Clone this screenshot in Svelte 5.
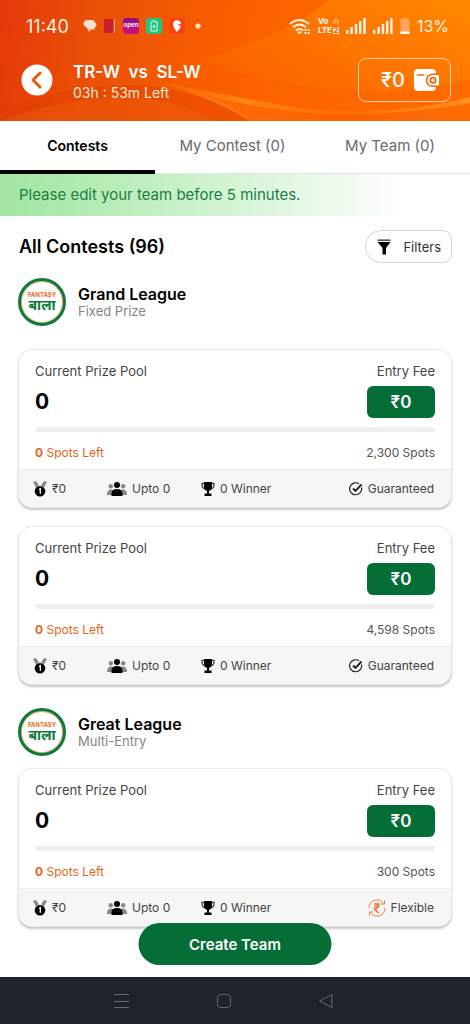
<script>
  let activeTab = $state('Contests');

  const tabs = ['Contests', 'My Contest (0)', 'My Team (0)'];

  const leagues = [
    {
      name: 'Grand League',
      type: 'Fixed Prize',
      contests: [
        { id: 1, pool: '0', fee: '₹0', left: 0, filled: 0, spots: '2,300', first: '₹0', upto: 0, winners: 0, tag: 'Guaranteed' },
        { id: 2, pool: '0', fee: '₹0', left: 0, filled: 0, spots: '4,598', first: '₹0', upto: 0, winners: 0, tag: 'Guaranteed' }
      ]
    },
    {
      name: 'Great League',
      type: 'Multi-Entry',
      contests: [
        { id: 3, pool: '0', fee: '₹0', left: 0, filled: 0, spots: '300', first: '₹0', upto: 0, winners: 0, tag: 'Flexible' }
      ]
    }
  ];
</script>

{#snippet signal()}
  <svg class="signal" viewBox="0 0 20 16" width="20" height="16" fill="#fff3e6">
    <rect x="0" y="12" width="2.4" height="4" />
    <rect x="4.4" y="9" width="2.4" height="7" />
    <rect x="8.8" y="6" width="2.4" height="10" />
    <rect x="13" y="3" width="2.4" height="13" />
    <rect x="17.2" y="0" width="2.4" height="16" />
  </svg>
{/snippet}

<div class="app">
  <header class="header">
    <svg class="waves" viewBox="0 0 470 121" preserveAspectRatio="none" aria-hidden="true">
      <defs>
        <linearGradient id="glow" x1="0" y1="1" x2="1" y2="0">
          <stop offset="0" stop-color="#ff8a00" stop-opacity="0" />
          <stop offset="1" stop-color="#ff9c00" stop-opacity="0.6" />
        </linearGradient>
        <linearGradient id="streak" x1="0" x2="1">
          <stop offset="0" stop-color="#ff8c1a" stop-opacity="0.1" />
          <stop offset="0.3" stop-color="#ff8c1a" stop-opacity="0.8" />
          <stop offset="0.6" stop-color="#ff7a00" stop-opacity="0.5" />
          <stop offset="1" stop-color="#ff9a2a" stop-opacity="0.8" />
        </linearGradient>
      </defs>
      <path d="M200 60Q290 35 328 0H470V80Q340 110 200 60Z" fill="url(#glow)" />
      <path d="M0 108Q90 80 150 86Q215 96 250 121H0Z" fill="#dc3a00" opacity="0.35" />
      <path d="M0 121Q60 98 130 97Q180 100 215 121Z" fill="#f26a10" opacity="0.3" />
      <path d="M150 80Q240 98 300 108Q390 118 470 97V103Q440 112 425 121H250Q215 98 150 80Z" fill="url(#streak)" />
      <path d="M250 121Q230 104 205 95Q270 112 330 114Q400 116 470 103Q440 112 425 121Z" fill="#fb5800" opacity="0.6" />
    </svg>

    <div class="status">
      <span class="clock">11:40</span>
      <div class="notifs">
        <svg viewBox="0 0 14 14" width="14" height="14" fill="#ffe0cf">
          <path d="M3.500 1h5q3 0 3.300 2.300Q13.500 4 13.500 6q0 2.300-2 2.800V10.500H8L5.500 13V10.500Q3.500 10 3.500 8 .5 7.500.5 4.500T3.500 1z" />
        </svg>
        <svg viewBox="0 0 12 16" width="12" height="16">
          <rect y="1" width="9" height="14" rx="1" fill="#c8202f" />
          <rect x="10" y="1" width="1" height="14" fill="#f2a58c" />
        </svg>
        <span class="open">open</span>
        <svg viewBox="0 0 16 16" width="16" height="16">
          <rect width="16" height="16" rx="3" fill="#26c281" />
          <path d="M5 4h1.500V3h3v1H11v9H5z" fill="none" stroke="#d9ffe9" />
          <path d="M8 6.500v4M6.500 8.500h3" stroke="#d9ffe9" />
        </svg>
        <svg viewBox="0 0 16 16" width="16" height="16">
          <rect width="16" height="16" rx="4" fill="#f94212" />
          <path d="M8 2.200a4 4 0 0 1 4 3.800l-2.500.3L9 7.500h3Q11 11 8 14 4 9.500 4 6a4 4 0 0 1 4-3.800z" fill="#fff" />
        </svg>
        <svg viewBox="0 0 6 6" width="6" height="6"><circle cx="3" cy="3" r="2.600" fill="#ffe3d2" /></svg>
      </div>
      <div class="system">
        <svg viewBox="0 0 22 17" width="22" height="17" fill="none" stroke="#fff3e6" stroke-width="2">
          <path d="M1 6Q10 -2 20 6M4 9.300Q10.500 3.700 17 9.300M7 12.400Q10.500 9.500 14 12.400" />
          <path d="M8.500 14L10.500 16 12.500 14z" fill="#fff3e6" stroke-width="1" />
          <path d="M16.500 11v5M19.700 11v5" stroke-dasharray="2 1" />
        </svg>
        <div class="volte">
          <span>Vo<svg viewBox="0 0 6 7" width="6" height="7"><path d="M1 6V2.500Q1 1 3 1t2 1.500V6M1 4h4" /></svg></span>
          <span>LTE<b>2</b></span>
        </div>
        {@render signal()}
        {@render signal()}
        <svg viewBox="0 0 10 16" width="10" height="16">
          <path d="M2.500 0h5v1h2v15h-9V1h2z" fill="#ffa45a" />
          <rect x="0.500" y="13.500" width="9" height="2.500" fill="#fff" />
        </svg>
        <span class="percent">13%</span>
      </div>
    </div>

    <div class="match">
      <button class="back" aria-label="Back">
        <svg viewBox="0 0 32 32" width="32" height="32">
          <circle cx="16" cy="16" r="15.500" fill="#fff" />
          <path d="M19 9L12 16l7 7" fill="none" stroke="#e45a0c" stroke-width="3" stroke-linecap="round" stroke-linejoin="round" />
        </svg>
      </button>
      <div class="match-info">
        <h1>TR-W&nbsp; vs &nbsp;SL-W</h1>
        <p>03h : 53m Left</p>
      </div>
      <button class="wallet">
        <span>₹0</span>
        <svg viewBox="0 0 26 24" width="26" height="24">
          <path d="M5 1h14q4 0 4 4v14q0 4-4 4H5q-4 0-4-4V5q0-4 4-4z" fill="#fff" />
          <path d="M4.500 7h6" stroke="#fb6500" stroke-width="1.600" stroke-linecap="round" />
          <path d="M27 6.200H19.500a6 6 0 0 0 0 12H27" fill="#fff" stroke="#fb6500" stroke-width="1.600" />
          <circle cx="20" cy="12.200" r="2.600" fill="none" stroke="#fb6500" stroke-width="1.800" />
        </svg>
      </button>
    </div>
  </header>

  <nav class="tabs">
    {#each tabs as tab}
      <button class:active={activeTab === tab} onclick={() => (activeTab = tab)}>{tab}</button>
    {/each}
  </nav>

  <p class="notice">Please edit your team before 5 minutes.</p>

  <main>
    <div class="heading">
      <h2>All Contests (96)</h2>
      <button class="filters">
        <svg viewBox="0 0 14 16" width="14" height="16">
          <path d="M0.500 3H13.500L9 9v6.500H5.500V9z" fill="#000" />
          <path d="M0.500 1.200h13" stroke="#555" stroke-width="1.600" />
        </svg>
        Filters
      </button>
    </div>

    {#each leagues as league}
      <section>
        <div class="league">
          <div class="logo"><small>FANTASY</small><span lang="hi">बाला</span></div>
          <div>
            <h3>{league.name}</h3>
            <p>{league.type}</p>
          </div>
        </div>

        {#each league.contests as contest (contest.id)}
          <article class="card">
            <div class="card-body">
              <div class="row labels">
                <span>Current Prize Pool</span>
                <span>Entry Fee</span>
              </div>
              <div class="row prize">
                <strong>{contest.pool}</strong>
                <button class="fee">{contest.fee}</button>
              </div>
              <div class="track"><div class="fill" style="width: {contest.filled}%"></div></div>
              <div class="row spots">
                <span class="left"><b>{contest.left}</b> Spots Left</span>
                <span>{contest.spots} Spots</span>
              </div>
            </div>
            <footer class="card-footer">
              <span class="stat">
                <svg viewBox="0 0 14 16" width="14" height="16">
                  <path d="M0 1l3-1 3 4.500-3 2zM14 1l-3-1-3 4.500 3 2z" fill="#888" />
                  <circle cx="7" cy="10.300" r="5.300" fill="#000" />
                  <path d="M6 8.500l1.300-.8v5" fill="none" stroke="#fff" stroke-width="1.300" />
                </svg>
                {contest.first}
              </span>
              <span class="stat">
                <svg viewBox="0 0 20 16" width="20" height="16">
                  <g fill="#888">
                    <circle cx="3.800" cy="5.200" r="2.200" />
                    <circle cx="16.200" cy="5.200" r="2.200" />
                    <path d="M0 14q0-5.500 4-5.500t4 5.500zM12 14q0-5.500 4-5.500t4 5.500z" />
                  </g>
                  <circle cx="10" cy="4" r="3" fill="#000" />
                  <path d="M4.500 15v-2.500q0-4.500 5.500-4.500t5.500 4.500V15z" fill="#000" />
                </svg>
                Upto {contest.upto}
              </span>
              <span class="stat">
                <svg viewBox="0 0 14 16" width="14" height="16">
                  <path d="M3.500 2.500H1V4q0 3.500 4 4M10.500 2.500H13V4q0 3.500-4 4" fill="none" stroke="#444" stroke-width="1.300" />
                  <path d="M3 1h8v4q0 4-3 5v2.500h2.500V15h-7v-2.500H6V10Q3 9 3 5z" fill="#000" />
                </svg>
                {contest.winners} Winner
              </span>
              <span class="stat tag">
                {#if contest.tag === 'Guaranteed'}
                  <svg viewBox="0 0 14 14" width="14" height="14" fill="none" stroke="#222">
                    <path d="M12.500 5.500A6 6 0 1 1 10 1.800" stroke-width="1.200" />
                    <path d="M4 6.500L6.500 9 12.500 2.500" stroke-width="1.900" />
                  </svg>
                {:else}
                  <svg viewBox="0 0 18 18" width="18" height="18" fill="none" stroke="#ee7b36">
                    <path d="M1 9A8 8 0 0 1 15.500 4.300M17 9A8 8 0 0 1 2.500 13.700M16.500 1.500v3.500H13M1.500 16.500V13H5" />
                    <path d="M6 5h6M6 7.500h6M7 5q3 0 3 2.200T6.500 10l4 4" stroke-width="1.700" />
                  </svg>
                {/if}
                {contest.tag}
              </span>
            </footer>
          </article>
        {/each}
      </section>
    {/each}
  </main>

  <button class="create">Create Team</button>

  <div class="navbar">
    <button aria-label="Recent apps">
      <svg viewBox="0 0 16 16" width="16" height="16"><path d="M0 1.500h15M0 8.500h15M0 14.500h15" /></svg>
    </button>
    <button aria-label="Home">
      <svg viewBox="0 0 16 16" width="16" height="16"><rect x="1.500" y="1.500" width="13" height="13" rx="3" /></svg>
    </button>
    <button aria-label="Go back">
      <svg viewBox="0 0 16 16" width="16" height="16"><path d="M14 1.500v13L1.500 8z" stroke-linejoin="round" /></svg>
    </button>
  </div>
</div>

<style>
  :global(body) {
    margin: 0;
    background: #fefefe;
  }

  .app {
    display: flex;
    flex-direction: column;
    min-height: 100vh;
    font-family: Inter, "Noto Sans", sans-serif;
    color: #000;
  }

  h1, h2, h3, p {
    margin: 0;
  }

  button {
    padding: 0;
    border: none;
    background: none;
    font: inherit;
    color: inherit;
    cursor: pointer;
  }

  svg {
    display: block;
    flex: none;
  }

  .header {
    position: relative;
    box-sizing: border-box;
    height: 121px;
    padding: 14px 19px 0 21px;
    background: linear-gradient(100deg, #e5380c 0%, #ea5006 20%, #fb6000 50%, #ff6c00 100%);
    color: #fff;
  }

  .waves {
    position: absolute;
    inset: 0;
    width: 100%;
    height: 100%;
  }

  .status {
    position: relative;
    display: flex;
    align-items: center;
    height: 24px;
    padding-left: 5px;
    color: #fff0e4;
  }

  .clock {
    width: 57px;
    font-size: 18px;
  }

  .notifs {
    display: flex;
    align-items: center;
    gap: 7px;
  }

  .notifs svg:last-child {
    margin-left: 3px;
  }

  .open {
    width: 16px;
    height: 16px;
    border-radius: 3px;
    background: linear-gradient(#8d1087, #d1107c);
    font-size: 6px;
    font-weight: 700;
    line-height: 14px;
    text-align: center;
  }

  .system {
    display: flex;
    align-items: center;
    gap: 7px;
    margin-left: auto;
  }

  .volte {
    width: 21px;
    font-size: 8px;
    font-weight: 800;
  }

  .volte span {
    display: flex;
    align-items: center;
    justify-content: space-between;
    height: 9px;
    line-height: 9px;
  }

  .volte svg {
    fill: none;
    stroke: #ffc797;
  }

  .volte b {
    width: 6px;
    border-radius: 1px;
    background: #fff0e4;
    color: #fb6200;
    font-size: 7px;
    line-height: 7px;
    text-align: center;
  }

  .percent {
    margin-right: 2px;
    font-size: 16px;
  }

  .match {
    position: relative;
    display: flex;
    align-items: center;
    height: 44px;
    margin-top: 20px;
  }

  .match-info {
    margin-left: 20px;
    padding-top: 4px;
  }

  h1 {
    font-size: 17px;
    font-weight: 600;
    line-height: 22px;
  }

  .match-info p {
    font-size: 14px;
    line-height: 20px;
    color: #ffe8d8;
  }

  .wallet {
    display: flex;
    align-items: center;
    justify-content: flex-end;
    gap: 8px;
    box-sizing: border-box;
    width: 93px;
    height: 44px;
    margin-left: auto;
    padding-right: 11px;
    border: 1px solid #ffd2ad;
    border-radius: 8px;
    font-size: 20px;
    font-weight: 500;
  }

  .tabs {
    display: grid;
    grid-template-columns: 155fr 155fr 160fr;
    box-sizing: border-box;
    height: 53px;
    border-bottom: 1px solid #e4e4e4;
  }

  .tabs button {
    height: 53px;
    border-bottom: 4px solid transparent;
    font-size: 15px;
    color: #6a6a6a;
  }

  .tabs .active {
    border-color: #000;
    color: #000;
    font-size: 14px;
    font-weight: 600;
  }

  .notice {
    padding: 0 19px;
    background: linear-gradient(90deg, #a0e5a0, #d5f4d5 50%, #fefefe 85%);
    color: #197f43;
    font-size: 15px;
    line-height: 42px;
  }

  main {
    padding: 14px 18px 96px;
  }

  .heading {
    display: flex;
    align-items: center;
    justify-content: space-between;
  }

  h2 {
    padding-left: 1px;
    font-size: 18px;
    font-weight: 600;
  }

  .filters {
    display: flex;
    align-items: center;
    gap: 12px;
    box-sizing: border-box;
    height: 33px;
    padding: 0 10px 0 11px;
    border: 1px solid #d6d6d6;
    border-radius: 16px 9px 9px 16px;
    font-size: 13px;
    color: #333;
  }

  .league {
    display: flex;
    align-items: center;
    gap: 12px;
    padding: 15px 0 23px;
  }

  section + section .league {
    padding: 5px 0 12px;
  }

  .logo {
    display: flex;
    flex-direction: column;
    align-items: center;
    justify-content: center;
    box-sizing: border-box;
    width: 48px;
    height: 48px;
    border: 3px solid #0d7a3c;
    border-radius: 50%;
    box-shadow: inset 0 0 0 1px #f0a465;
    color: #0d7a3c;
  }

  .logo small {
    color: #ee6a22;
    font-size: 6px;
    font-weight: 700;
    line-height: 6px;
  }

  .logo span {
    font-size: 14px;
    font-weight: 700;
    line-height: 14px;
  }

  h3 {
    font-size: 16px;
    font-weight: 600;
    line-height: 18px;
  }

  .league p {
    font-size: 13px;
    line-height: 16px;
    color: #858585;
  }

  .card {
    box-sizing: border-box;
    margin-bottom: 18px;
    border: 1px solid #e8e8e8;
    border-radius: 14px;
    background: #fff;
    box-shadow: 0 2px 2px #c9c9c9;
    overflow: hidden;
  }

  .card-body {
    padding: 12px 16px 7px;
  }

  .row {
    display: flex;
    align-items: center;
    justify-content: space-between;
  }

  .labels {
    height: 18px;
    font-size: 13px;
    color: #444;
  }

  .prize {
    height: 43px;
  }

  .prize strong {
    font-size: 21px;
    font-weight: 700;
  }

  .fee {
    width: 68px;
    height: 32px;
    border-radius: 6px;
    background: #056d36;
    color: #fff;
    font-size: 17px;
    font-weight: 600;
  }

  .track {
    height: 5px;
    margin: 4px 0 10px;
    border-radius: 3px;
    background: #efefef;
  }

  .fill {
    height: 100%;
    border-radius: 3px;
    background: #e8641b;
  }

  .spots {
    height: 20px;
    font-size: 12px;
    color: #555;
  }

  .left {
    color: #e8641b;
  }

  .card-footer {
    display: grid;
    grid-template-columns: 74px 94px 1fr auto;
    align-items: center;
    box-sizing: border-box;
    height: 38px;
    padding: 0 17px 0 14px;
    border-top: 1px solid #eee;
    background: #f6f6f6;
    font-size: 12px;
    color: #444;
  }

  .stat {
    display: flex;
    align-items: center;
    gap: 5px;
  }

  .create {
    position: fixed;
    bottom: 59px;
    left: 50%;
    width: 193px;
    height: 42px;
    border-radius: 21px;
    background: #056d36;
    color: #fff;
    font-size: 15px;
    font-weight: 600;
    transform: translateX(-50%);
  }

  .navbar {
    position: fixed;
    bottom: 0;
    left: 0;
    right: 0;
    display: flex;
    align-items: center;
    justify-content: center;
    gap: 86px;
    height: 47px;
    padding-right: 23px;
    background: #1e2229;
  }

  .navbar svg {
    fill: none;
    stroke: #666a70;
    stroke-width: 1;
  }
</style>
